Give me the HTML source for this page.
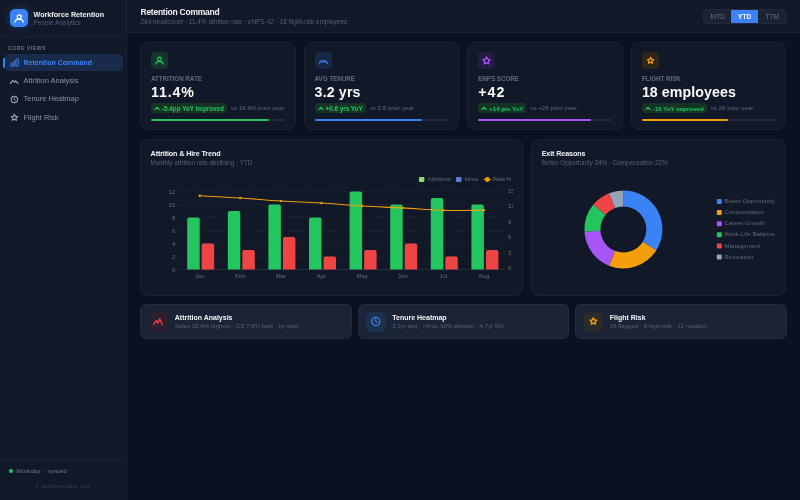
<!DOCTYPE html>
<html><head><meta charset="utf-8">
<style>
*{box-sizing:border-box;margin:0;padding:0}
html,body{width:800px;height:500px;overflow:hidden;background:#0b1120;font-family:"Liberation Sans",sans-serif;color:#e5e7eb}
.abs{position:absolute}
#side{position:absolute;left:0;top:0;width:127px;height:500px;background:#111827;border-right:1px solid #1a2131}
#side .hd{position:absolute;left:0;top:0;width:126px;height:36.6px;border-bottom:1px solid #1a2131}
.logo{position:absolute;left:10px;top:9px;width:18px;height:18px;border-radius:5px;background:#3b82f6;box-shadow:0 0 10px rgba(59,130,246,.35)}
.t1{position:absolute;left:33.5px;top:10.4px;font-size:7.2px;font-weight:bold;color:#f3f4f6;white-space:nowrap}
.t2{position:absolute;left:33.5px;top:18.6px;font-size:6.45px;color:#535e70;white-space:nowrap}
.sec{position:absolute;left:8px;top:45px;font-size:5px;font-weight:bold;letter-spacing:.6px;color:#6b7280}
.nav{position:absolute;left:4px;width:119px;height:17px;border-radius:5px;font-size:7.5px;color:#8a93a4;white-space:nowrap}
.nav.act{background:#192a4b;color:#3b82f6;font-weight:bold;font-size:7px}
.nav .bar{position:absolute;left:-.7px;top:4px;width:1.8px;height:10px;border-radius:1px;background:#3b82f6}
.nav svg{position:absolute;left:6px;top:4.5px}
.nav span{position:absolute;left:19.5px;top:3.9px}
.nav.act span{top:4.5px}
.foot{position:absolute;left:0;top:459px;width:126px;border-top:1px solid #1a2131;height:41px}
#hdr{position:absolute;left:127px;top:0;width:673px;height:32.6px;background:#111827;border-bottom:1px solid #1a2131}
.card{position:absolute;background:#111827;border:1px solid #1b2333;border-radius:8px}
.kl{position:absolute;left:10px;top:32.1px;font-size:6.3px;font-weight:bold;letter-spacing:-.05px;color:#616b7c;white-space:nowrap}
.kv{position:absolute;left:10px;top:41px;font-size:14.2px;font-weight:bold;color:#f9fafb;white-space:nowrap}
.ico{position:absolute;left:10px;top:9px;width:17px;height:17px;border-radius:4px}
.kb{position:absolute;left:10px;top:60px;height:10px;white-space:nowrap;font-size:0}
.badge{position:relative;display:inline-block;vertical-align:top;height:9.8px;border-radius:3px;background:#163426;color:#22c55e;font-size:6.3px;font-weight:bold;white-space:nowrap;padding-left:11px;padding-right:3px;line-height:11.2px}
.badge svg{position:absolute;left:3px;top:2.6px}
.vs{display:inline-block;vertical-align:top;margin-left:4px;font-size:6.2px;line-height:9.8px;color:#5f6878;white-space:nowrap}
.trk{position:absolute;left:10px;top:75.5px;width:134.3px;height:2.5px;border-radius:2px;background:#1f2937}
.trk i{position:absolute;left:0;top:0;height:2.5px;border-radius:2px}
.ct{position:absolute;left:9.6px;top:9.2px;font-size:7.2px;letter-spacing:-.13px;font-weight:bold;color:#f3f4f6;white-space:nowrap}
.cs{position:absolute;left:9.6px;top:19px;font-size:6.3px;color:#586274;white-space:nowrap}
.bc{position:absolute;top:304px;height:35px;background:#1b2336;border:1px solid #232b3e;border-radius:6px}
.bc .bi{position:absolute;left:7.8px;top:7px;width:19.5px;height:19.5px;border-radius:5px}
.bc .bt{position:absolute;left:33.8px;top:9px;font-size:7px;font-weight:bold;color:#f3f4f6;white-space:nowrap}
.bc .bs{position:absolute;left:33.8px;top:16.8px;font-size:6.1px;color:#586274;white-space:nowrap}
#root{position:relative;width:800px;height:500px;overflow:hidden;will-change:transform;background:#0b1120}
</style></head><body><div id="root">
<div id="side">
  <div class="hd">
    <div class="logo"><svg width="18" height="18" viewBox="0 0 18 18"><circle cx="9.1" cy="7.9" r="1.95" fill="none" stroke="#fff" stroke-width="1.2"/><path d="M10.4 6.7l1.6.35" stroke="#fff" stroke-width="1.1" stroke-linecap="round"/><path d="M4.9 13.1c.5-1.9 2.2-2.9 4.2-2.9s3.7 1 4.2 2.9" fill="none" stroke="#fff" stroke-width="1.2" stroke-linecap="round"/></svg></div>
    <div class="t1">Workforce Retention</div>
    <div class="t2">People Analytics</div>
  </div>
  <svg class="abs" style="left:0;top:0;z-index:2" width="126" height="130" viewBox="0 0 126 130">
<g fill="none" stroke="#3b82f6" stroke-width="1" stroke-linejoin="round">
<rect x="10.6" y="63.1" width="2" height="3.3" rx="1"/>
<rect x="13.2" y="61.4" width="2" height="5" rx="1"/>
<rect x="15.9" y="58.8" width="2.4" height="7.6" rx="1.2"/>
</g>
<path d="M10.4 83.3L12.6 80.6 14.5 82.2 15.6 80.8 17.9 83.3" fill="none" stroke="#94a3b8" stroke-width="1.25" stroke-linecap="round" stroke-linejoin="round"/>
<circle cx="14.4" cy="99.4" r="3.2" fill="none" stroke="#94a3b8" stroke-width="1.15"/>
<path d="M14.2 97.4v2.1l1.4 1.2" fill="none" stroke="#94a3b8" stroke-width="0.9" stroke-linecap="round" stroke-linejoin="round"/>
<path d="M14.4 114.3l1 2 2.2.3-1.6 1.5.4 2.2-2-1.1-2 1.1.4-2.2-1.6-1.5 2.2-.3z" fill="none" stroke="#94a3b8" stroke-width="1.25" stroke-linejoin="round"/>
</svg>
  <div class="sec">CORE VIEWS</div>
  <div class="nav act" style="top:54px"><i class="bar"></i>
    <span>Retention Command</span></div>
  <div class="nav" style="top:72.5px">
    <span>Attrition Analysis</span></div>
  <div class="nav" style="top:90.5px">
    <span>Tenure Heatmap</span></div>
  <div class="nav" style="top:109px">
    <span>Flight Risk</span></div>
  <div class="foot">
    <i class="abs" style="left:9px;top:8.8px;width:4px;height:4px;border-radius:2px;background:#22c55e"></i>
    <div class="abs" style="left:16.3px;top:6.8px;font-size:6.1px;color:#717a8b;white-space:nowrap">Workday ·&nbsp; synced</div>
    <div class="abs" style="left:0;width:126px;text-align:center;top:23px;font-size:5.5px;letter-spacing:.3px;color:#3a4252;white-space:nowrap">© dashtemplate.com</div>
  </div>
</div>

<div id="hdr">
  <div class="abs" style="left:13.5px;top:7.1px;font-size:8.5px;letter-spacing:-.25px;font-weight:bold;color:#f3f4f6;white-space:nowrap">Retention Command</div>
  <div class="abs" style="left:13.5px;top:17.6px;font-size:6.45px;color:#566072;white-space:nowrap">284 headcount · 11.4% attrition rate · eNPS 42 · 18 flight-risk employees</div>
</div>

<div class="card" style="left:140px;top:42px;width:155.6px;height:88px">
  <div class="ico" style="background:#15342a"><svg class="abs" style="left:0;top:0" width="17" height="17" viewBox="0 0 17 17"><circle cx="8.5" cy="7" r="1.9" stroke="#22c55e" stroke-width="1.15" fill="none"/><path d="M4.7 12.2C5.1 10.4 6.6 9.4 8.5 9.4S11.9 10.4 12.3 12.2" stroke="#22c55e" stroke-width="1.2" fill="none" stroke-linecap="round"/></svg></div>
  <div class="kl">ATTRITION RATE</div>
  <div class="kv" style="letter-spacing:.85px">11.4%</div>
  <div class="kb"><span class="badge" style="font-size:6.3px"><svg width="6" height="4.5" viewBox="0 0 6 4.5"><path d="M.8 3.6L3 1.4l2.2 2.2" stroke="#22c55e" stroke-width="1.1" fill="none" stroke-linecap="round"/></svg>-5.4pp YoY improved</span><span class="vs">vs 16.8% prior year</span></div>
  <div class="trk"><i style="width:88%;background:#22c55e"></i></div>
</div>
<div class="card" style="left:303.6px;top:42px;width:155.6px;height:88px">
  <div class="ico" style="background:#172848"><svg class="abs" style="left:0;top:0" width="17" height="17" viewBox="0 0 17 17"><path d="M4.4 11.3L6.6 8.4 8.4 10.2 9.6 8.5 12.4 11.3" stroke="#3b82f6" stroke-width="1.25" fill="none" stroke-linecap="round" stroke-linejoin="round"/></svg></div>
  <div class="kl">AVG TENURE</div>
  <div class="kv" style="letter-spacing:.15px">3.2 yrs</div>
  <div class="kb"><span class="badge" style="font-size:6.3px"><svg width="6" height="4.5" viewBox="0 0 6 4.5"><path d="M.8 3.6L3 1.4l2.2 2.2" stroke="#22c55e" stroke-width="1.1" fill="none" stroke-linecap="round"/></svg>+0.6 yrs YoY</span><span class="vs">vs 2.6 prior year</span></div>
  <div class="trk"><i style="width:80%;background:#3b82f6"></i></div>
</div>
<div class="card" style="left:467.2px;top:42px;width:155.6px;height:88px">
  <div class="ico" style="background:#231d42"><svg class="abs" style="left:0;top:0" width="17" height="17" viewBox="0 0 17 17"><path d="M8.50 4.80L9.65 7.12L12.21 7.49L10.35 9.30L10.79 11.86L8.50 10.65L6.21 11.86L6.65 9.30L4.79 7.49L7.35 7.12z" stroke="#a855f7" stroke-width="1.2" fill="none" stroke-linejoin="round"/></svg></div>
  <div class="kl">ENPS SCORE</div>
  <div class="kv" style="letter-spacing:1.1px">+42</div>
  <div class="kb"><span class="badge" style="font-size:6.1px"><svg width="6" height="4.5" viewBox="0 0 6 4.5"><path d="M.8 3.6L3 1.4l2.2 2.2" stroke="#22c55e" stroke-width="1.1" fill="none" stroke-linecap="round"/></svg>+14 pts YoY</span><span class="vs">vs +28 prior year</span></div>
  <div class="trk"><i style="width:84%;background:#a855f7"></i></div>
</div>
<div class="card" style="left:630.9px;top:42px;width:155.6px;height:88px">
  <div class="ico" style="background:#2e2618"><svg class="abs" style="left:0;top:0" width="17" height="17" viewBox="0 0 17 17"><path d="M8.50 5.30L9.44 7.31L11.64 7.58L10.02 9.09L10.44 11.27L8.50 10.20L6.56 11.27L6.98 9.09L5.36 7.58L7.56 7.31z" stroke="#f59e0b" stroke-width="1.3" fill="none" stroke-linejoin="round"/></svg></div>
  <div class="kl">FLIGHT RISK</div>
  <div class="kv" style="letter-spacing:.08px">18 employees</div>
  <div class="kb"><span class="badge" style="font-size:6.1px"><svg width="6" height="4.5" viewBox="0 0 6 4.5"><path d="M.8 3.6L3 1.4l2.2 2.2" stroke="#22c55e" stroke-width="1.1" fill="none" stroke-linecap="round"/></svg>-10 YoY improved</span><span class="vs">vs 28 prior year</span></div>
  <div class="trk"><i style="width:64%;background:#f59e0b"></i></div>
</div>
<div class="card" style="left:140px;top:139px;width:383.1px;height:156.5px;overflow:hidden">
  <div class="ct">Attrition &amp; Hire Trend</div>
  <div class="cs">Monthly attrition rate declining · YTD</div>
  <svg class="abs" style="left:-1px;top:-1px" width="373" height="156" viewBox="0 0 373 156"><line x1="39.4" y1="130.4" x2="364" y2="130.4" stroke="#283144" stroke-width="0.9"/><text x="35.3" y="132.5" text-anchor="end" font-size="6" fill="#656e7e">0</text><line x1="39.4" y1="117.4" x2="364" y2="117.4" stroke="#222b3d" stroke-width="0.8" stroke-dasharray="2 1.5"/><text x="35.3" y="119.5" text-anchor="end" font-size="6" fill="#656e7e">2</text><line x1="39.4" y1="104.4" x2="364" y2="104.4" stroke="#222b3d" stroke-width="0.8" stroke-dasharray="2 1.5"/><text x="35.3" y="106.5" text-anchor="end" font-size="6" fill="#656e7e">4</text><line x1="39.4" y1="91.4" x2="364" y2="91.4" stroke="#222b3d" stroke-width="0.8" stroke-dasharray="2 1.5"/><text x="35.3" y="93.5" text-anchor="end" font-size="6" fill="#656e7e">6</text><line x1="39.4" y1="78.4" x2="364" y2="78.4" stroke="#222b3d" stroke-width="0.8" stroke-dasharray="2 1.5"/><text x="35.3" y="80.5" text-anchor="end" font-size="6" fill="#656e7e">8</text><line x1="39.4" y1="65.4" x2="364" y2="65.4" stroke="#222b3d" stroke-width="0.8" stroke-dasharray="2 1.5"/><text x="35.3" y="67.5" text-anchor="end" font-size="6" fill="#656e7e">10</text><line x1="39.4" y1="52.4" x2="364" y2="52.4" stroke="#222b3d" stroke-width="0.8" stroke-dasharray="2 1.5"/><text x="35.3" y="54.5" text-anchor="end" font-size="6" fill="#656e7e">12</text><text x="368" y="131.00" font-size="6" fill="#656e7e">0</text><text x="368" y="115.60" font-size="6" fill="#656e7e">3</text><text x="368" y="100.20" font-size="6" fill="#656e7e">6</text><text x="368" y="84.80" font-size="6" fill="#656e7e">9</text><text x="368" y="69.40" font-size="6" fill="#656e7e">12</text><text x="368" y="54.00" font-size="6" fill="#656e7e">15</text><text x="59.7" y="138.8" text-anchor="middle" font-size="6" fill="#656e7e">Jan</text><text x="100.3" y="138.8" text-anchor="middle" font-size="6" fill="#656e7e">Feb</text><text x="140.9" y="138.8" text-anchor="middle" font-size="6" fill="#656e7e">Mar</text><text x="181.5" y="138.8" text-anchor="middle" font-size="6" fill="#656e7e">Apr</text><text x="222.1" y="138.8" text-anchor="middle" font-size="6" fill="#656e7e">May</text><text x="262.7" y="138.8" text-anchor="middle" font-size="6" fill="#656e7e">Jun</text><text x="303.3" y="138.8" text-anchor="middle" font-size="6" fill="#656e7e">Jul</text><text x="343.9" y="138.8" text-anchor="middle" font-size="6" fill="#656e7e">Aug</text><path d="M47.20 130.40V80.40q0-2.0 2.0-2.0h8.50q2.0 0 2.0 2.0V130.40z" fill="#22c55e"/><path d="M61.70 130.40V106.40q0-2.0 2.0-2.0h8.50q2.0 0 2.0 2.0V130.40z" fill="#ef4444"/><path d="M87.80 130.40V73.90q0-2.0 2.0-2.0h8.50q2.0 0 2.0 2.0V130.40z" fill="#22c55e"/><path d="M102.30 130.40V112.90q0-2.0 2.0-2.0h8.50q2.0 0 2.0 2.0V130.40z" fill="#ef4444"/><path d="M128.40 130.40V67.40q0-2.0 2.0-2.0h8.50q2.0 0 2.0 2.0V130.40z" fill="#22c55e"/><path d="M142.90 130.40V99.90q0-2.0 2.0-2.0h8.50q2.0 0 2.0 2.0V130.40z" fill="#ef4444"/><path d="M169.00 130.40V80.40q0-2.0 2.0-2.0h8.50q2.0 0 2.0 2.0V130.40z" fill="#22c55e"/><path d="M183.50 130.40V119.40q0-2.0 2.0-2.0h8.50q2.0 0 2.0 2.0V130.40z" fill="#ef4444"/><path d="M209.60 130.40V54.40q0-2.0 2.0-2.0h8.50q2.0 0 2.0 2.0V130.40z" fill="#22c55e"/><path d="M224.10 130.40V112.90q0-2.0 2.0-2.0h8.50q2.0 0 2.0 2.0V130.40z" fill="#ef4444"/><path d="M250.20 130.40V67.40q0-2.0 2.0-2.0h8.50q2.0 0 2.0 2.0V130.40z" fill="#22c55e"/><path d="M264.70 130.40V106.40q0-2.0 2.0-2.0h8.50q2.0 0 2.0 2.0V130.40z" fill="#ef4444"/><path d="M290.80 130.40V60.90q0-2.0 2.0-2.0h8.50q2.0 0 2.0 2.0V130.40z" fill="#22c55e"/><path d="M305.30 130.40V119.40q0-2.0 2.0-2.0h8.50q2.0 0 2.0 2.0V130.40z" fill="#ef4444"/><path d="M331.40 130.40V67.40q0-2.0 2.0-2.0h8.50q2.0 0 2.0 2.0V130.40z" fill="#22c55e"/><path d="M345.90 130.40V112.90q0-2.0 2.0-2.0h8.50q2.0 0 2.0 2.0V130.40z" fill="#ef4444"/><path d="M59.7 56.75C67.82 57.2 84.06 57.95 100.3 59C116.54 60.05 124.66 61.0 140.9 62C157.14 63.0 165.26 63.0 181.5 64C197.74 65.0 205.86 66.02 222.1 67C238.34 67.98 246.46 68.04 262.7 68.9C278.94 69.76 287.06 70.82 303.3 71.3C319.54 71.78 335.78 71.3 343.9 71.3" stroke="#f59e0b" stroke-width="1.1" fill="none" stroke-linejoin="round"/><circle cx="59.7" cy="56.75" r="1.2" fill="#f59e0b"/><circle cx="100.3" cy="59" r="1.2" fill="#f59e0b"/><circle cx="140.9" cy="62" r="1.2" fill="#f59e0b"/><circle cx="181.5" cy="64" r="1.2" fill="#f59e0b"/><circle cx="222.1" cy="67" r="1.2" fill="#f59e0b"/><circle cx="262.7" cy="68.9" r="1.2" fill="#f59e0b"/><circle cx="303.3" cy="71.3" r="1.2" fill="#f59e0b"/><circle cx="343.9" cy="71.3" r="1.2" fill="#f59e0b"/><rect x="278.9" y="37.9" width="5.5" height="5.2" rx="1" fill="#86d97a"/><text x="287.5" y="42.0" font-size="6" fill="#656e7e">Attritions</text><rect x="316" y="37.9" width="5.5" height="5.2" rx="1" fill="#5b7fd6"/><text x="324.5" y="42.0" font-size="6" fill="#656e7e">Hires</text><circle cx="347.35" cy="40.5" r="2.4" fill="#f59e0b"/><line x1="343.8" y1="40.5" x2="350.9" y2="40.5" stroke="#f59e0b" stroke-width="1.1"/><text x="353" y="42.0" font-size="6" fill="#656e7e">Rate%</text></svg>
</div>

<div class="card" style="left:531.1px;top:139px;width:255.4px;height:156.5px">
  <div class="ct">Exit Reasons</div>
  <div class="cs">Better Opportunity 34% · Compensation 22%</div>
  <svg class="abs" style="left:-1px;top:-1px" width="255" height="156" viewBox="0 0 255 156"><path d="M92.4 51.4A39 39 0 0 1 125.329 111.297L111.82 102.724A23 23 0 0 0 92.4 67.4z" fill="#3b82f6"/><path d="M125.329 111.297A39 39 0 0 1 78.043 126.661L83.933 111.785A23 23 0 0 0 111.82 102.724z" fill="#f59e0b"/><path d="M78.043 126.661A39 39 0 0 1 53.477 92.849L69.445 91.844A23 23 0 0 0 83.933 111.785z" fill="#a855f7"/><path d="M53.477 92.849A39 39 0 0 1 62.35 65.54L74.678 75.739A23 23 0 0 0 69.445 91.844z" fill="#22c55e"/><path d="M62.35 65.54A39 39 0 0 1 78.043 54.139L83.933 69.015A23 23 0 0 0 74.678 75.739z" fill="#ef4444"/><path d="M78.043 54.139A39 39 0 0 1 92.4 51.4L92.4 67.4A23 23 0 0 0 83.933 69.015z" fill="#94a3b8"/><rect x="185.80" y="60.00" width="5" height="5" rx="1" fill="#3b82f6"/><text x="193.30" y="64.10" font-size="6.2" fill="#5f6879">Better Opportunity</text><rect x="185.80" y="71.10" width="5" height="5" rx="1" fill="#f59e0b"/><text x="193.30" y="75.20" font-size="6.2" fill="#5f6879">Compensation</text><rect x="185.80" y="82.20" width="5" height="5" rx="1" fill="#a855f7"/><text x="193.30" y="86.30" font-size="6.2" fill="#5f6879">Career Growth</text><rect x="185.80" y="93.30" width="5" height="5" rx="1" fill="#22c55e"/><text x="193.30" y="97.40" font-size="6.2" fill="#5f6879">Work-Life Balance</text><rect x="185.80" y="104.40" width="5" height="5" rx="1" fill="#ef4444"/><text x="193.30" y="108.50" font-size="6.2" fill="#5f6879">Management</text><rect x="185.80" y="115.50" width="5" height="5" rx="1" fill="#94a3b8"/><text x="193.30" y="119.60" font-size="6.2" fill="#5f6879">Relocation</text></svg>
</div>

<div class="bc" style="left:140px;width:211.5px">
  <div class="bi" style="background:#2d1f2d"><svg class="abs" style="left:0;top:0" width="19.5" height="19.5" viewBox="0 0 19.5 19.5"><path d="M4.75 12.5L7.25 8.6 9 11 10.75 6.8 13.25 12.5" stroke="#ef4444" stroke-width="1.35" fill="none" stroke-linecap="round" stroke-linejoin="round"/></svg></div>
  <div class="bt">Attrition Analysis</div>
  <div class="bs">Sales 15.4% highest · CS 7.9% best · by dept</div>
</div>
<div class="bc" style="left:357.5px;width:211.5px">
  <div class="bi" style="background:#1e3050"><svg class="abs" style="left:0;top:0" width="19.5" height="19.5" viewBox="0 0 19.5 19.5"><circle cx="9.75" cy="9.5" r="4.05" stroke="#3b82f6" stroke-width="1.2" fill="none"/><path d="M9.75 7.1v2.4l1.6 1" stroke="#3b82f6" stroke-width="1.1" fill="none" stroke-linecap="round" stroke-linejoin="round"/></svg></div>
  <div class="bt">Tenure Heatmap</div>
  <div class="bs">3.2yr avg · &lt;6mo 42% attrition · 4-7yr 5%</div>
</div>
<div class="bc" style="left:575px;width:211.5px">
  <div class="bi" style="background:#2c2a2a"><svg class="abs" style="left:0;top:0" width="19.5" height="19.5" viewBox="0 0 19.5 19.5"><path d="M9.40 5.80L10.43 7.88L12.73 8.22L11.06 9.84L11.46 12.13L9.40 11.05L7.34 12.13L7.74 9.84L6.07 8.22L8.37 7.88z" stroke="#f59e0b" stroke-width="1.35" fill="none" stroke-linejoin="round"/></svg></div>
  <div class="bt">Flight Risk</div>
  <div class="bs">18 flagged · 6 high-risk · 12 medium</div>
</div>

<div class="abs" style="left:703.1px;top:9px;width:83.5px;height:14.8px;border-radius:4px;background:#1a2233;border:1px solid #222a3b;font-size:6.7px;color:#6b7280">
  <div class="abs" style="left:0;top:0;width:27.5px;height:12.8px;text-align:center;line-height:14px">MTD</div>
  <div class="abs" style="left:27px;top:-0.2px;width:27px;height:13.2px;background:#3b82f6;color:#fff;font-weight:bold;font-size:6.5px;text-align:center;line-height:13.2px">YTD</div>
  <div class="abs" style="left:54px;top:0;width:28px;height:12.8px;text-align:center;line-height:14px">TTM</div>
</div>
</div></body></html>
